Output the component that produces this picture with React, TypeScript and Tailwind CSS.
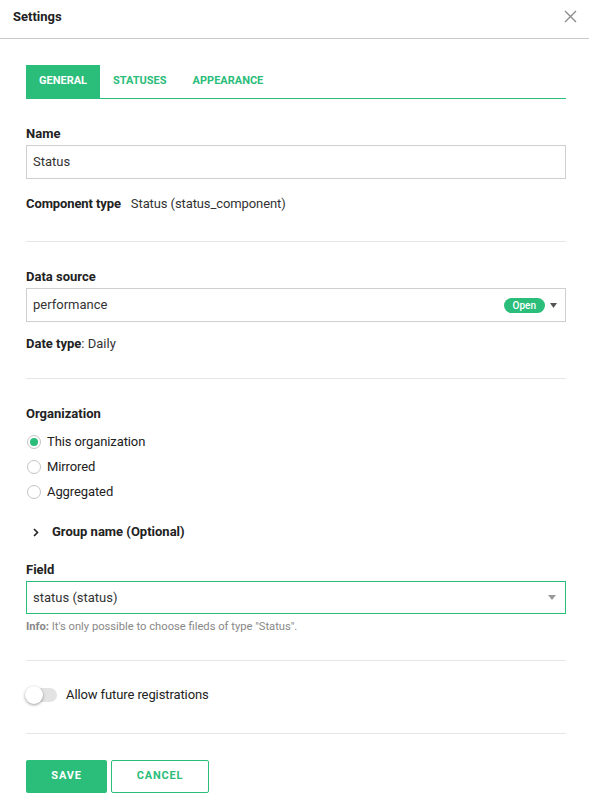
import React from "react";

function Radio({ checked, label }: { checked?: boolean; label: string }) {
  return (
    <div className="flex h-[25px] items-center">
      <span className="ml-[1px] flex h-[14px] w-[14px] items-center justify-center rounded-full border border-[#c4c4c4] bg-white">
        {checked && <span className="h-[8px] w-[8px] rounded-full bg-[#2bbd7a]" />}
      </span>
      <span className="ml-[6px] text-[13px] leading-[16px] tracking-[-0.1px] text-[#222]">{label}</span>
    </div>
  );
}

function Divider() {
  return <div className="h-px bg-[#e6e6e6]" />;
}

export default function App() {
  return (
    <div className="min-h-[806px] w-[589px] bg-white text-[#222]" style={{ fontFamily: "Roboto, 'Noto Sans', sans-serif" }}>
      {/* header */}
      <div className="flex h-[39px] items-center justify-between border-b border-[#c8c8c8] pl-[13px] pr-[12px]">
        <span className="-mt-[4px] text-[13px] font-bold leading-[16px] text-[#222]">Settings</span>
        <svg width="13" height="13" viewBox="0 0 13 13" className="-mt-[6px]">
          <path d="M1 1 L12 12 M12 1 L1 12" stroke="#8a8a8a" strokeWidth="1.3" />
        </svg>
      </div>

      <div className="pl-[26px] pr-[23px]">
        {/* tabs */}
        <div className="mt-[26px] flex border-b border-[#2bbd7a]">
          <div className="flex h-[33px] items-center bg-[#2bbd7a] px-[13px] text-[11px] font-bold text-white">GENERAL</div>
          <div className="flex h-[33px] items-center px-[13px] text-[11px] font-bold text-[#2bbd7a]">STATUSES</div>
          <div className="flex h-[33px] items-center px-[13px] text-[11px] font-bold text-[#2bbd7a]">APPEARANCE</div>
        </div>

        {/* Name */}
        <div className="mt-[27px] text-[13px] font-bold leading-[16px]">Name</div>
        <div className="mt-[3px] flex h-[34px] items-center border border-[#cfcfcf] px-[6px] text-[13px] text-[#333]">Status</div>

        <div className="mt-[17px] flex text-[13px] leading-[16px] tracking-[-0.1px]">
          <span className="font-bold">Component type</span>
          <span className="ml-[10px] text-[#333]">Status (status_component)</span>
        </div>

        <div className="mt-[29px]"><Divider /></div>

        {/* Data source */}
        <div className="mt-[27px] text-[13px] font-bold leading-[16px]">Data source</div>
        <div className="mt-[3px] flex h-[34px] items-center border border-[#cfcfcf] pl-[6px] pr-[8px] text-[13px] text-[#333]">
          <span className="flex-1">performance</span>
          <span className="flex h-[15px] items-center rounded-full bg-[#2bbd7a] px-[9px] text-[10px] font-medium leading-[15px] text-white">Open</span>
          <svg width="7" height="5" viewBox="0 0 7 5" className="ml-[5px]">
            <path d="M0 0 L7 0 L3.5 5 Z" fill="#555" />
          </svg>
        </div>

        <div className="mt-[14px] text-[13px] leading-[16px] text-[#333]">
          <span className="font-bold text-[#222]">Date type</span>: Daily
        </div>

        <div className="mt-[26px]"><Divider /></div>

        {/* Organization */}
        <div className="mt-[27px] text-[13px] font-bold leading-[16px]">Organization</div>
        <div className="mt-[7px]">
          <Radio checked label="This organization" />
          <Radio label="Mirrored" />
          <Radio label="Aggregated" />
        </div>

        <div className="mt-[20px] flex items-center text-[13px] font-bold leading-[16px]">
          <svg width="6" height="9" viewBox="0 0 6 9" className="ml-[7px]">
            <path d="M1 1 L4.5 4.5 L1 8" stroke="#222" strokeWidth="1.6" fill="none" />
          </svg>
          <span className="ml-[13px]">Group name (Optional)</span>
        </div>

        {/* Field */}
        <div className="mt-[22px] text-[13px] font-bold leading-[16px]">Field</div>
        <div className="mt-[3px] flex h-[33px] items-center border border-[#2bbd7a] pl-[6px] pr-[9px] text-[13px] text-[#333]">
          <span className="flex-1">status (status)</span>
          <svg width="8" height="5" viewBox="0 0 8 5">
            <path d="M0 0 L8 0 L4 5 Z" fill="#999" />
          </svg>
        </div>
        <div className="mt-[6px] text-[11.2px] leading-[14px] text-[#888]">
          <span className="font-bold">Info:</span> It's only possible to choose fileds of type "Status".
        </div>

        <div className="mt-[26px]"><Divider /></div>

        {/* Toggle */}
        <div className="mt-[24px] flex h-[20px] items-center">
          <div className="relative h-[14px] w-[31px] rounded-full bg-[#e3e3e3]">
            <span className="absolute -left-[1px] -top-[2px] h-[18px] w-[18px] rounded-full bg-white shadow-[0_1px_3px_rgba(0,0,0,0.4)]" />
          </div>
          <span className="ml-[9px] text-[13px] leading-[16px] tracking-[-0.1px] text-[#222]">Allow future registrations</span>
        </div>

        <div className="mt-[28px]"><Divider /></div>

        {/* Buttons */}
        <div className="mt-[26px] flex gap-[4px]">
          <div className="flex h-[33px] w-[81px] items-center justify-center rounded-[2px] bg-[#2bbd7a] text-[11px] font-bold tracking-[0.8px] text-white">SAVE</div>
          <div className="flex h-[33px] w-[98px] items-center justify-center rounded-[2px] border border-[#2bbd7a] bg-white text-[11px] font-bold tracking-[0.8px] text-[#2bbd7a]">CANCEL</div>
        </div>
      </div>
    </div>
  );
}
